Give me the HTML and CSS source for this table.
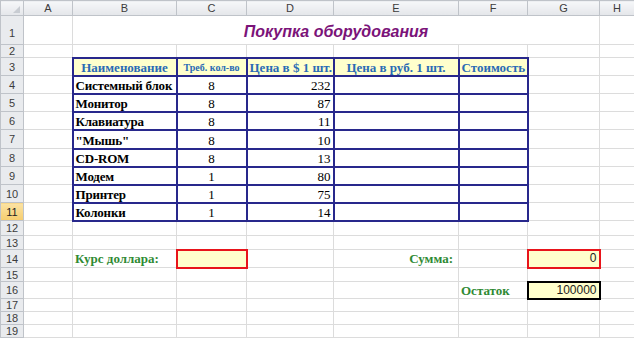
FILE: index.html
```html
<!DOCTYPE html>
<html lang="ru">
<head>
<meta charset="utf-8">
<title>Покупка оборудования</title>
<link rel="stylesheet" href="styles.css">
</head>
<body>
<table class="sheet">
  <colgroup>
    <col class="c-rh"><col class="c-a"><col class="c-b"><col class="c-c"><col class="c-d"><col class="c-e"><col class="c-f"><col class="c-g"><col class="c-h">
  </colgroup>
  <tr class="r-hd">
    <th class="corner"><span class="tri"></span></th><th class="ch">A</th><th class="ch">B</th><th class="ch">C</th><th class="ch">D</th><th class="ch">E</th><th class="ch">F</th><th class="ch">G</th><th class="ch">H</th>
  </tr>
  <tr class="r1">
    <th class="rh tall">1</th><td></td><td colspan="6" class="title">Покупка оборудования</td><td></td>
  </tr>
  <tr class="r2">
    <th class="rh">2</th><td></td><td></td><td></td><td></td><td></td><td></td><td></td><td></td>
  </tr>
  <tr class="r3">
    <th class="rh">3</th><td></td>
    <td class="t hd">Наименование</td><td class="t hd small">Треб. кол-во</td><td class="t hd">Цена в $ 1 шт.</td><td class="t hd">Цена в руб. 1 шт.</td><td class="t hd">Стоимость</td>
    <td></td><td></td>
  </tr>
  <tr class="r4">
    <th class="rh">4</th><td></td><td class="t nm">Системный блок</td><td class="t q">8</td><td class="t p">232</td><td class="t"></td><td class="t"></td><td></td><td></td>
  </tr>
  <tr class="r5">
    <th class="rh">5</th><td></td><td class="t nm">Монитор</td><td class="t q">8</td><td class="t p">87</td><td class="t"></td><td class="t"></td><td></td><td></td>
  </tr>
  <tr class="r6">
    <th class="rh">6</th><td></td><td class="t nm">Клавиатура</td><td class="t q">8</td><td class="t p">11</td><td class="t"></td><td class="t"></td><td></td><td></td>
  </tr>
  <tr class="r7">
    <th class="rh">7</th><td></td><td class="t nm">"Мышь"</td><td class="t q">8</td><td class="t p">10</td><td class="t"></td><td class="t"></td><td></td><td></td>
  </tr>
  <tr class="r8">
    <th class="rh">8</th><td></td><td class="t nm">CD-ROM</td><td class="t q">8</td><td class="t p">13</td><td class="t"></td><td class="t"></td><td></td><td></td>
  </tr>
  <tr class="r9">
    <th class="rh">9</th><td></td><td class="t nm">Модем</td><td class="t q">1</td><td class="t p">80</td><td class="t"></td><td class="t"></td><td></td><td></td>
  </tr>
  <tr class="r10">
    <th class="rh">10</th><td></td><td class="t nm">Принтер</td><td class="t q">1</td><td class="t p">75</td><td class="t"></td><td class="t"></td><td></td><td></td>
  </tr>
  <tr class="r11">
    <th class="rh sel">11</th><td></td><td class="t nm">Колонки</td><td class="t q">1</td><td class="t p">14</td><td class="t"></td><td class="t"></td><td></td><td></td>
  </tr>
  <tr class="r12">
    <th class="rh">12</th><td></td><td></td><td></td><td></td><td></td><td></td><td></td><td></td>
  </tr>
  <tr class="r13">
    <th class="rh">13</th><td></td><td></td><td></td><td></td><td></td><td></td><td></td><td></td>
  </tr>
  <tr class="r14">
    <th class="rh">14</th><td></td><td class="lbl">Курс доллара:</td><td class="inp red"></td><td></td><td class="lbl right">Сумма:</td><td></td><td class="inp red num">0</td><td></td>
  </tr>
  <tr class="r15">
    <th class="rh">15</th><td></td><td></td><td></td><td></td><td></td><td></td><td></td><td></td>
  </tr>
  <tr class="r16">
    <th class="rh">16</th><td></td><td></td><td></td><td></td><td></td><td class="lbl">Остаток</td><td class="inp blk num">100000</td><td></td>
  </tr>
  <tr class="r17">
    <th class="rh">17</th><td></td><td></td><td></td><td></td><td></td><td></td><td></td><td></td>
  </tr>
  <tr class="r18">
    <th class="rh">18</th><td></td><td></td><td></td><td></td><td></td><td></td><td></td><td></td>
  </tr>
  <tr class="r19">
    <th class="rh">19</th><td></td><td></td><td></td><td></td><td></td><td></td><td></td><td></td>
  </tr>
</table>
</body>
</html>
```

FILE: styles.css
```css
html, body {
  margin: 0;
  padding: 0;
  background: #ffffff;
  overflow: hidden;
}

.sheet {
  border-collapse: collapse;
  table-layout: fixed;
  width: 634px;
  font-family: "Liberation Serif", "DejaVu Serif", serif;
  font-size: 13px;
  color: #000;
}

.c-rh { width: 23px; }
.c-a { width: 49px; }
.c-b { width: 104px; }
.c-c { width: 70px; }
.c-d { width: 87px; }
.c-e { width: 125px; }
.c-f { width: 69px; }
.c-g { width: 72px; }
.c-h { width: 35px; }

.r-hd { height: 15px; }
.r1 { height: 29px; }
.r2 { height: 10px; }
.r3, .r4, .r5, .r6, .r8, .r9, .r10, .r11 { height: 18px; }
.r7 { height: 19px; }
.r12 { height: 15px; }
.r13 { height: 14px; }
.r14 { height: 18px; }
.r15 { height: 14px; }
.r16 { height: 17px; }
.r17 { height: 13px; }
.r18 { height: 13px; }
.r19 { height: 13px; }

td {
  border: 1px solid #dcdcdc;
  padding: 0 2px;
  white-space: nowrap;
  overflow: hidden;
  vertical-align: bottom;
  line-height: 15px;
}

th {
  padding: 0;
  font-family: "Liberation Sans", Arial, sans-serif;
  font-weight: normal;
  font-size: 11px;
  color: #3c3c3c;
  background: linear-gradient(#f6f7f9, #e4e6ea);
  border: 1px solid #bfc3c9;
  line-height: 12px;
}

.ch {
  text-align: center;
  vertical-align: middle;
}

.corner {
  position: relative;
}

.tri {
  position: absolute;
  right: 3px;
  bottom: 2px;
  width: 0;
  height: 0;
  border-left: 7px solid transparent;
  border-bottom: 7px solid #c8ccd2;
}

.rh {
  text-align: center;
  vertical-align: middle;
  background: #e9ebee;
}

.rh.tall {
  vertical-align: bottom;
  padding-bottom: 5px;
}

.rh.sel {
  background: linear-gradient(#fbe3a4, #f6cd6e);
  color: #222;
}

.title {
  text-align: center;
  font-family: "Liberation Sans", Arial, sans-serif;
  font-weight: bold;
  font-style: italic;
  font-size: 16px;
  color: #7b1379;
  vertical-align: bottom;
  padding-bottom: 3px;
  line-height: 18px;
}

.t {
  border: 2px solid #28288c;
}

.hd {
  background: #ffffcc;
  color: #2a6bb5;
  font-weight: bold;
  text-align: center;
  font-size: 13px;
}

.hd.small {
  font-size: 10px;
}

.nm {
  font-weight: bold;
  text-align: left;
  letter-spacing: -0.2px;
}

.q {
  text-align: center;
}

.p {
  text-align: right;
}

.lbl {
  color: #2f8a33;
  font-weight: bold;
  vertical-align: middle;
}

.lbl.right {
  text-align: right;
  padding-right: 5px;
}

.inp {
  background: #ffffcc;
}

.red {
  border: 2px solid #e8141b;
}

.blk {
  border: 2px solid #000;
}

.num {
  text-align: right;
  font-family: "Liberation Sans", Arial, sans-serif;
  font-size: 12px;
  color: #222;
  vertical-align: middle;
}
```
